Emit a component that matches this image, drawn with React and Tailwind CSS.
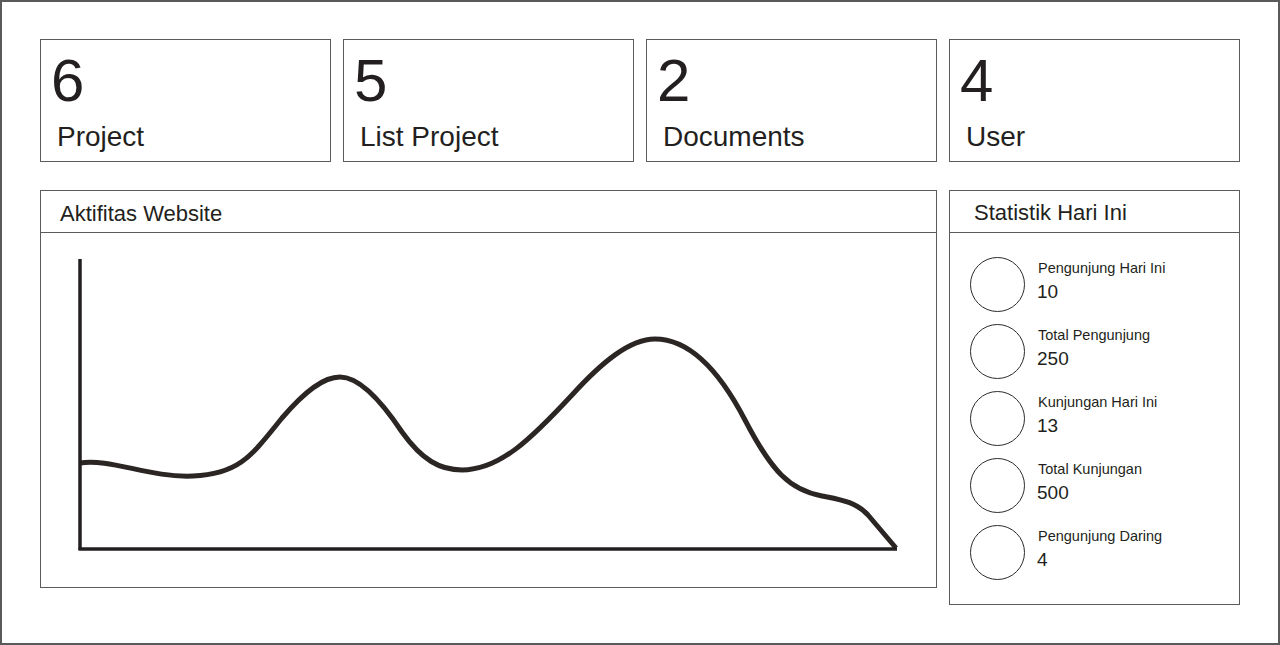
import React from "react";

const cards = [
  { n: "6", label: "Project" },
  { n: "5", label: "List Project" },
  { n: "2", label: "Documents" },
  { n: "4", label: "User" },
];

const stats = [
  { label: "Pengunjung Hari Ini", value: "10" },
  { label: "Total Pengunjung", value: "250" },
  { label: "Kunjungan Hari Ini", value: "13" },
  { label: "Total Kunjungan", value: "500" },
  { label: "Pengunjung Daring", value: "4" },
];

function Chart() {
  return (
    <svg width="895" height="354" viewBox="0 0 895 354" className="block">
      <g transform="translate(-41,-233)">
        <path
          d="M80,463 C110,458 150,478 193,476 C240,474 252,455 282,418 C306,390 324,377 340,377 C360,377 382,402 402,432 C422,460 440,470 462,470 C500,470 532,438 572,395 C602,362 630,339 655,339 C690,339 720,372 745,420 C772,472 790,490 822,496 C842,500 856,502 868,515 L896,548"
          fill="none"
          stroke="#2b2523"
          strokeWidth="5"
          strokeLinejoin="round"
        />
        <line x1="80" y1="259" x2="80" y2="550" stroke="#231f20" strokeWidth="3.5" />
        <line x1="78.5" y1="549" x2="897" y2="549" stroke="#231f20" strokeWidth="3.5" />
      </g>
    </svg>
  );
}

export default function App() {
  return (
    <div
      className="w-[1280px] h-[645px] border-2 border-[#5a5a5a] bg-white flex flex-col pt-[37px] pl-[38px] text-[#231f20]"
      style={{ fontFamily: '"Liberation Sans", Arial, sans-serif' }}
    >
      <div className="flex gap-[12px]">
        {cards.map((c) => (
          <div key={c.label} className="w-[291px] h-[123px] border border-[#5b5b5b] flex flex-col pt-[11px]">
            <div className="text-[60px] leading-none pl-[10px]">{c.n}</div>
            <div className="text-[28px] leading-none mt-[12px] pl-[16px]">{c.label}</div>
          </div>
        ))}
      </div>
      <div className="flex gap-[12px] items-start mt-[28px]">
        <div className="w-[897px] h-[398px] border border-[#5b5b5b] flex flex-col">
          <div className="h-[42px] border-b border-[#5b5b5b] pt-[12px] pl-[19px] text-[22px] leading-none">
            Aktifitas Website
          </div>
          <div className="flex-1">
            <Chart />
          </div>
        </div>
        <div className="w-[291px] h-[415px] border border-[#5b5b5b] flex flex-col">
          <div className="h-[42px] border-b border-[#5b5b5b] pt-[11px] pl-[24px] text-[22px] leading-none">
            Statistik Hari Ini
          </div>
          <div className="flex flex-col gap-[12px] pt-[24px] pl-[20px]">
            {stats.map((s) => (
              <div key={s.label} className="flex items-start">
                <div className="w-[55px] h-[55px] rounded-full border border-[#2b2b2b] shrink-0" />
                <div className="flex flex-col pl-[13px] pt-[4px]">
                  <div className="text-[14.5px] leading-none">{s.label}</div>
                  <div className="text-[19px] leading-none mt-[6px] -ml-[1px]">{s.value}</div>
                </div>
              </div>
            ))}
          </div>
        </div>
      </div>
    </div>
  );
}
